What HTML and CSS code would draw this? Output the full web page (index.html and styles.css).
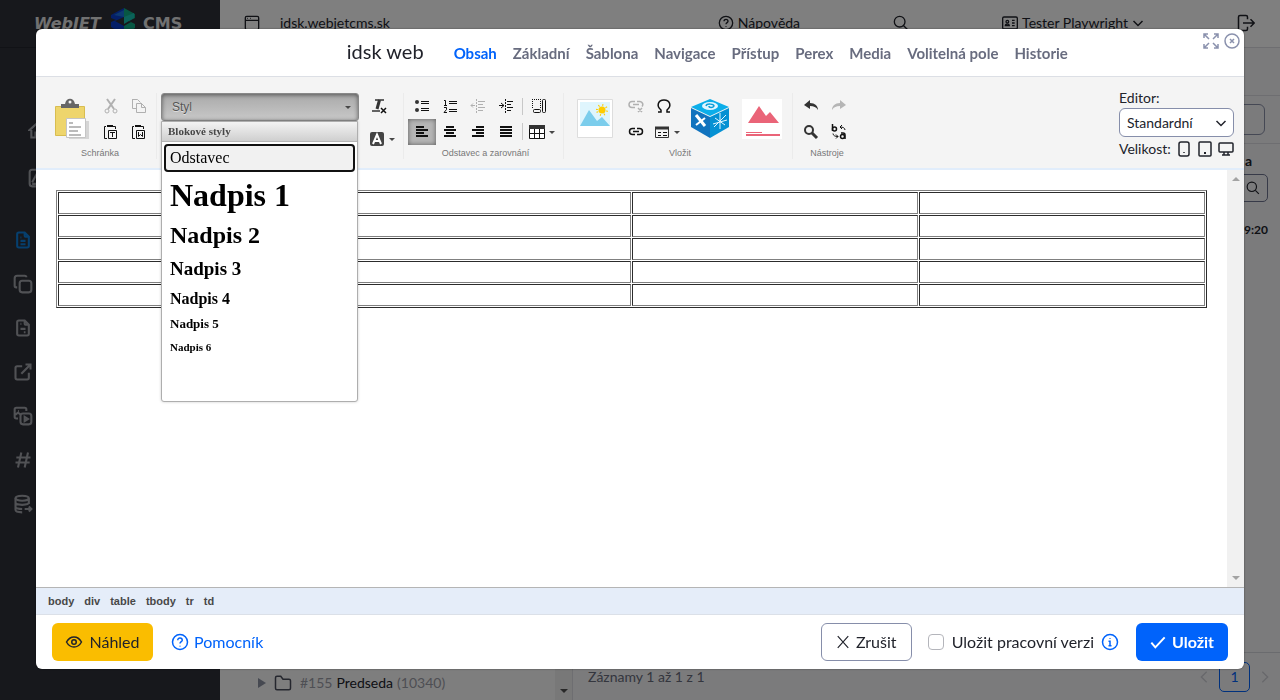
FILE: index.html
```html
<!DOCTYPE html>
<html lang="cs">
<head>
<meta charset="utf-8">
<title>WebJET CMS – idsk web</title>
<link rel="stylesheet" href="styles.css">
</head>
<body>
<svg class="sprite" aria-hidden="true">
  <symbol id="file" viewBox="0 0 24 24"><path d="M14 3v4a1 1 0 0 0 1 1h4M17 21H7a2 2 0 0 1-2-2V5a2 2 0 0 1 2-2h7l5 5v11a2 2 0 0 1-2 2zM9 9h1M9 13h6M9 17h6"/></symbol>
  <symbol id="copy" viewBox="0 0 24 24"><rect x="8" y="8" width="14" height="14" rx="3"/><path d="M5 16H4a2 2 0 0 1-2-2V5a3 3 0 0 1 3-3h9a2 2 0 0 1 2 2"/></symbol>
  <symbol id="invoice" viewBox="0 0 24 24"><path d="M14 3v4a1 1 0 0 0 1 1h4M17 21H7a2 2 0 0 1-2-2V5a2 2 0 0 1 2-2h7l5 5v11a2 2 0 0 1-2 2zM9 7h1M9 13h6M13 17h2"/></symbol>
  <symbol id="external" viewBox="0 0 24 24"><path d="M11 5H5a2 2 0 0 0-2 2v12a2 2 0 0 0 2 2h12a2 2 0 0 0 2-2v-6M10 14 21 3M15 3h6v6"/></symbol>
  <symbol id="media" viewBox="0 0 24 24"><rect x="9" y="9" width="13" height="13" rx="3"/><path d="M6 15H4a2 2 0 0 1-2-2V4a2 2 0 0 1 2-2h10a2 2 0 0 1 2 2v2M6 6h1M2 11l4-3 3 2M14 13v5l4-2.500z"/></symbol>
  <symbol id="hash" viewBox="0 0 24 24"><path d="M4 9h17M3 15h17M10 3 6 21M18 3l-4 18"/></symbol>
  <symbol id="database" viewBox="0 0 24 24"><ellipse cx="11" cy="5" rx="8" ry="3"/><path d="M3 5v14c0 2 3 3 8 3M3 10c0 2 3 3 8 3s8-1 8-3M19 5v7M3 15c0 2 3 3 8 3M14 18h8M19 15l3 3-3 3"/></symbol>
  <symbol id="home" viewBox="0 0 24 24"><path d="M4 12H2l10-9 10 9h-2M4 12v9h16v-9M9 21v-6h6v6"/></symbol>
  <symbol id="chart" viewBox="0 0 24 24"><rect x="2" y="2" width="20" height="20" rx="3"/><path d="m5 17 5-9 4 6 4-8M5 19h14"/></symbol>
  <symbol id="window" viewBox="0 0 24 24"><rect x="2" y="2" width="20" height="20" rx="2"/><path d="M2 8h20M5 5h1M9 5h1"/></symbol>
  <symbol id="help" viewBox="0 0 24 24"><circle cx="12" cy="12" r="10"/><path d="M9 9.500c0-4 6-3.500 6 0 0 2-3 2-3 4.500M12 17v1"/></symbol>
  <symbol id="search" viewBox="0 0 24 24"><circle cx="10" cy="10" r="8"/><path d="m16 16 6 6"/></symbol>
  <symbol id="card" viewBox="0 0 24 24"><rect x="1" y="3" width="22" height="18" rx="2"/><circle cx="8" cy="10" r="2"/><path d="M5 16c0-3 6-3 6 0zM15 8h4M15 12h4M15 16h4"/></symbol>
  <symbol id="down" viewBox="0 0 24 24"><path d="m3 8 9 9 9-9"/></symbol>
  <symbol id="logout" viewBox="0 0 24 24"><path d="M14 7V4a2 2 0 0 0-2-2H4a2 2 0 0 0-2 2v16a2 2 0 0 0 2 2h8a2 2 0 0 0 2-2v-3M8 12h15M18 7l5 5-5 5"/></symbol>
  <symbol id="info" viewBox="0 0 24 24"><circle cx="12" cy="12" r="10"/><path d="M12 7v1M10 11h2v6M10 17h4"/></symbol>
  <symbol id="eye" viewBox="0 0 24 24"><path d="M2 12c5-9 15-9 20 0-5 9-15 9-20 0z"/><circle cx="12" cy="12" r="3"/></symbol>
  <symbol id="x" viewBox="0 0 24 24"><path d="m3 2 18 20M21 2 3 22"/></symbol>
  <symbol id="check" viewBox="0 0 24 24"><path d="m2 13 6 7L22 5"/></symbol>
  <symbol id="folder" viewBox="0 0 24 24"><path d="M4 3h5l3 4h8a2 2 0 0 1 2 2v10a2 2 0 0 1-2 2H4a2 2 0 0 1-2-2V5a2 2 0 0 1 2-2z"/></symbol>
  <symbol id="left" viewBox="0 0 24 24"><path d="m16 4-8 8 8 8"/></symbol>
  <symbol id="right" viewBox="0 0 24 24"><path d="m8 4 8 8-8 8"/></symbol>
</svg>

<div class="app">
  <aside class="sidebar">
    <div class="logo">
      <span class="logo-web">WebJET</span>
      <svg class="logo-mark" viewBox="0 0 26 28"><path fill="#0a3fd0" d="M0 8 13 1v9L4 14l9 5v9L0 20v-5l5-2-5-2z"/><path fill="#0fae86" d="m13 1 11 6v4l-6 3 6 3v4l-11 7v-9l7-4-7-5z"/><path fill="#16c4b4" d="m13 10 10-4v5l-10 6z"/><path fill="#1a72e0" d="m3 8 10-5v7z"/></svg>
      <span class="logo-cms">CMS</span>
    </div>
    <nav class="sections" aria-label="Sekce">
      <a href="#home" aria-label="Domů"><svg class="ico"><use href="#home"/></svg></a>
      <a href="#stats" aria-label="Statistika"><svg class="ico"><use href="#chart"/></svg></a>
    </nav>
    <nav class="pages" aria-label="Menu">
      <a href="#pages" class="current" aria-label="Web stránky"><svg class="ico"><use href="#file"/></svg></a>
      <a href="#templates" aria-label="Šablony"><svg class="ico"><use href="#copy"/></svg></a>
      <a href="#forms" aria-label="Formuláře"><svg class="ico"><use href="#invoice"/></svg></a>
      <a href="#links" aria-label="Odkazy"><svg class="ico"><use href="#external"/></svg></a>
      <a href="#media" aria-label="Média"><svg class="ico"><use href="#media"/></svg></a>
      <a href="#tags" aria-label="Značky"><svg class="ico"><use href="#hash"/></svg></a>
      <a href="#data" aria-label="Data"><svg class="ico"><use href="#database"/></svg></a>
    </nav>
  </aside>
  <div class="main">
    <header class="topbar">
      <span class="domain"><svg class="ico16"><use href="#window"/></svg>idsk.webjetcms.sk</span>
      <a href="#help"><svg class="ico16"><use href="#help"/></svg>Nápověda</a>
      <a href="#search" aria-label="Hledat"><svg class="ico16"><use href="#search"/></svg></a>
      <a href="#user"><svg class="ico16"><use href="#card"/></svg>Tester Playwright<svg class="ico12"><use href="#down"/></svg></a>
      <a href="#logout" aria-label="Odhlásit"><svg class="ico18"><use href="#logout"/></svg></a>
    </header>
    <div class="workspace">
      <section class="tree">
        <div class="tree-row"><span class="tri-right"></span><svg class="ico18"><use href="#folder"/></svg><span class="muted">#155</span><span>Predseda</span><span class="muted">(10340)</span></div>
        <div class="tree-scroll"><span class="tri-down"></span></div>
      </section>
      <section class="records">
        <div class="strip"></div>
        <div class="strip"><input class="filter" type="text" aria-label="Filtr"></div>
        <div class="cell-head">a</div>
        <button class="search-btn" aria-label="Hledat"><svg class="ico14"><use href="#search"/></svg></button>
        <div class="cell-time">9:20</div>
        <footer class="pager">
          <span class="count">Záznamy 1 až 1 z 1</span>
          <svg class="ico16 faint"><use href="#left"/></svg>
          <button class="page">1</button>
          <svg class="ico16 faint"><use href="#right"/></svg>
        </footer>
      </section>
    </div>
  </div>
</div>

<div class="backdrop">
<div class="modal" role="dialog" aria-label="idsk web">
  <header class="modal-head">
    <h1>idsk web</h1>
    <nav class="tabs">
      <a class="active" href="#obsah">Obsah</a><a href="#zakladni">Základní</a><a href="#sablona">Šablona</a><a href="#navigace">Navigace</a><a href="#pristup">Přístup</a><a href="#perex">Perex</a><a href="#mediat">Media</a><a href="#pole">Volitelná pole</a><a href="#historie">Historie</a>
    </nav>
    <div class="win">
      <button aria-label="Zvětšit"><svg viewBox="0 0 16 16"><path d="M1 5V1h4M11 1h4v4M15 11v4h-4M5 15H1v-4M1 1l5 5M15 1l-5 5M15 15l-5-5M1 15l5-5"/></svg></button>
      <button aria-label="Zavřít"><svg viewBox="0 0 16 16"><circle cx="8" cy="8" r="7"/><path d="m6 6 4 4M10 6l-4 4"/></svg></button>
    </div>
  </header>

  <div class="toolbar">
    <section class="group">
      <div class="tools">
        <button class="big" aria-label="Vložit"><svg width="34" height="42" viewBox="0 0 34 42"><path fill="#eed56c" stroke="#d8bd50" d="M.5 8.500h29v29H.5z"/><path fill="#d5d5d5" d="M14 23h20v18H14z"/><path fill="#666" d="M6 6h4c1-7 9-7 10 0h4v4H6z"/><circle cx="15" cy="4" r="1.500" fill="#f4f4f4"/><path fill="#fff" stroke="#c5c5c5" d="M11.500 20.500h19v19h-19z"/><path stroke="#bbb" stroke-width="2" d="M14 25h4M14 29h12M14 33h9M14 37h12"/></svg></button>
        <div class="cells two">
          <button aria-label="Vyjmout"><svg class="i dim" viewBox="0 0 16 16"><path d="m4 1 7 10M12 1 5 11" stroke-width="2"/><circle cx="4" cy="13" r="2"/><circle cx="12" cy="13" r="2"/></svg></button>
          <button aria-label="Kopírovat"><svg class="i dim" viewBox="0 0 16 16"><path d="M1.500 1.500h5l3 3M1.500 1v9.500H5M5.500 5.500h5l4 4v5h-9zM10.500 5v4.500h4"/></svg></button>
          <button aria-label="Vložit text"><svg class="i" viewBox="0 0 16 16"><path d="M3 2.500H1.500v12H4M10 2.500h2.500V5M5.500 6.500h8v8h-8z"/><path stroke-width="2" d="M4 2h6"/><path d="M7 8.500h5M9.500 8.500V13"/></svg></button>
          <button aria-label="Vložit z Wordu"><svg class="i" viewBox="0 0 16 16"><path d="M3 2.500H1.500v12H4M10 2.500h2.500V5M5.500 6.500h8v8h-8z"/><path stroke-width="2" d="M4 2h6"/><path d="M7.500 8v4.500l2-2 2 2V8"/></svg></button>
        </div>
      </div>
      <div class="group-label">Schránka</div>
    </section>

    <section class="group style-group">
      <div class="tools">
        <div class="combo">
          <button class="combo-btn" aria-expanded="true">Styl<span class="caret"></span></button>
          <div class="combo-panel">
            <div class="combo-title">Blokové styly</div>
            <ul role="listbox">
              <li class="p focused">Odstavec</li>
              <li class="s1">Nadpis 1</li>
              <li class="s2">Nadpis 2</li>
              <li class="s3">Nadpis 3</li>
              <li class="s4">Nadpis 4</li>
              <li class="s5">Nadpis 5</li>
              <li class="s6">Nadpis 6</li>
            </ul>
          </div>
        </div>
        <div class="format">
          <button aria-label="Odstranit formátování"><svg class="i" viewBox="0 0 16 16"><path stroke="#333" stroke-width="1.500" d="M4 2h9M1 13h8"/><path stroke="#333" stroke-width="3" d="M8.500 2 6 11"/><path stroke-width="1.500" d="m10 10 5 5M15 10l-5 5"/></svg></button>
          <button class="with-caret" aria-label="Barva pozadí"><svg class="i" viewBox="0 0 16 16"><rect x="1" y="1" width="14" height="14" rx="2" fill="#444" stroke="none"/><path stroke="#fff" stroke-width="2" d="m4 13 4-9.500L12 13M5.500 10h5"/></svg><span class="caret"></span></button>
        </div>
      </div>
    </section>

    <section class="group">
      <div class="tools">
        <div class="cells four">
          <button aria-label="Odrážky"><svg class="i" viewBox="0 0 16 16"><circle cx="3" cy="4" r="2" fill="#333" stroke="none"/><circle cx="3" cy="12" r="2" fill="#333" stroke="none"/><path d="M7 3.500h8M7 5.500h8M7 10.500h8M7 12.500h8"/></svg></button>
          <button aria-label="Číslování"><svg class="i" viewBox="0 0 16 16"><path d="M2 2.500h1.500V7M2 7.500h3M2 9.500h2.500v2L2 14.500h3M7 3.500h8M7 5.500h8M7 11.500h8M7 13.500h8"/></svg></button>
          <button aria-label="Zmenšit odsazení"><svg class="i dim" viewBox="0 0 16 16"><path d="M6.500 1v14" stroke-dasharray="2 1"/><path d="M8 3.500h7M8 6.500h5M8 9.500h7M8 12.500h5M5 7.500H1M3 5.500l-2 2 2 2"/></svg></button>
          <button aria-label="Zvětšit odsazení"><svg class="i" viewBox="0 0 16 16"><path d="M7.500 1v14" stroke-dasharray="2 1"/><path d="M9 3.500h6M9 6.500h4M9 9.500h6M9 12.500h4M1 7.500h5M3 5l3 2.500L3 10"/></svg></button>
          <button class="pressed" aria-label="Zarovnat vlevo"><svg class="i thick" viewBox="0 0 16 16"><path d="M2 3h8M2 6h12M2 9h8M2 12h12"/></svg></button>
          <button aria-label="Na střed"><svg class="i thick" viewBox="0 0 16 16"><path d="M4 3h8M2 6h12M4 9h8M2 12h12"/></svg></button>
          <button aria-label="Zarovnat vpravo"><svg class="i thick" viewBox="0 0 16 16"><path d="M6 3h8M2 6h12M6 9h8M2 12h12"/></svg></button>
          <button aria-label="Do bloku"><svg class="i thick" viewBox="0 0 16 16"><path d="M2 3h12M2 6h12M2 9h12M2 12h12"/></svg></button>
        </div>
        <div class="rules"><span></span><span></span></div>
        <div class="format">
          <button aria-label="Blok"><svg class="i" viewBox="0 0 16 16"><path stroke-dasharray="1 1" d="M1.500 1v9M1 1.500h9M9.500 1v9"/><rect x="2.500" y="11.500" width="7" height="3" rx="1"/><rect x="11.500" y="1.500" width="3" height="13" rx="1"/></svg></button>
          <button class="with-caret" aria-label="Tabulka"><svg class="i" viewBox="0 0 16 16"><path fill="#fff" d="M.5 2.500h15v12H.5zM.5 9.500h15M5.500 4v10M10.500 4v10"/><path stroke="#333" stroke-width="4" d="M0 3h16"/></svg><span class="caret"></span></button>
        </div>
      </div>
      <div class="group-label">Odstavec a zarovnání</div>
    </section>

    <section class="group">
      <div class="tools">
        <button class="big" aria-label="Obrázek"><svg width="36" height="40" viewBox="0 0 36 40"><path fill="#fff" stroke="#ddd" d="M.5.5h35v38H.5z"/><path fill="#dff5fd" d="M3 3h30v24H3z"/><path fill="#7bcdec" d="M3 27 12 11l8 11 5-4 8 9z"/><circle cx="25" cy="11" r="3.500" fill="#fc0"/><path stroke="#fc0" stroke-width="2" stroke-dasharray="1 3" fill="none" d="M20 11a5 5 0 0 1 10 0 5 5 0 0 1-10 0"/></svg></button>
        <div class="cells two">
          <button aria-label="Zrušit odkaz"><svg class="i dim" viewBox="0 0 16 16"><path d="M7 9.500H4a3 3 0 0 1 0-6h3M9 3.500h3a3 3 0 0 1 2 5M5 6.500h6M10 10l4 4M14 10l-4 4" stroke-width="1.500"/></svg></button>
          <button aria-label="Symbol"><svg class="i" viewBox="0 0 16 16"><path stroke-width="1.500" d="M2 14h3v-2C0 8 2 2 8 2s8 6 3 10v2h3"/></svg></button>
          <button aria-label="Odkaz"><svg class="i" viewBox="0 0 16 16"><path stroke-width="1.500" d="M7 4.500H4.500a3 3 0 0 0 0 6H7M9 4.500h2.500a3 3 0 0 1 0 6H9M5 7.500h6"/></svg></button>
          <button class="with-caret" aria-label="Formulář"><svg class="i" viewBox="0 0 16 16"><path stroke="#333" d="M1.500 3.500h13v10h-13z"/><path stroke="#333" stroke-width="3" d="M1 4h14"/><path d="M4 8.500h3M4 11.500h3M9 8.500h4M9 11.500h4"/></svg><span class="caret"></span></button>
        </div>
        <button class="big cube" aria-label="Aplikace"><svg width="40" height="42" viewBox="0 0 40 42"><path fill="#0baeea" d="m20 1 19 8-19 9L1 9z"/><path fill="#1173be" d="m1 10 19 9v21L1 29z"/><path fill="#0591d3" d="m39 10-19 9v21l19-11z"/><ellipse cx="20" cy="8" rx="8" ry="4" fill="#e2f6ff"/><path fill="none" stroke="#0b9ed8" stroke-width="1.500" d="M16 8c1-3 8-2 8 0-1 2-5 2-5 0"/><path stroke="#fff" stroke-width="3" d="m6 17 9 11"/><path stroke="#fff" stroke-width="2" d="M15 20 6 27"/><path stroke="#e2f6ff" d="m24 29 12-12M25 20l10 7M30 15v16M23 26l14-4"/></svg></button>
        <button class="big" aria-label="Galerie"><svg width="40" height="40" viewBox="0 0 40 40"><path fill="#fff" d="M0 0h40v40H0z"/><path fill="#ea6478" d="M6 24 17 7l7 10 4-4 9 11z"/><path fill="#ea6478" d="M4 33h16v1H4zM4 35h34v2H4z"/></svg></button>
      </div>
      <div class="group-label">Vložit</div>
    </section>

    <section class="group last">
      <div class="tools">
        <div class="cells two">
          <button aria-label="Zpět"><svg class="i" viewBox="0 0 16 16"><path fill="#333" stroke="none" d="m1 7 6-5v3c5 0 8 3 8 7-2-3-4-4-8-4v3z"/></svg></button>
          <button aria-label="Znovu"><svg class="i" viewBox="0 0 16 16"><path fill="#b5b5b5" stroke="none" d="M15 7 9 2v3c-5 0-8 3-8 7 2-3 4-4 8-4v3z"/></svg></button>
          <button aria-label="Najít"><svg class="i" viewBox="0 0 16 16"><circle cx="6" cy="6" r="4" stroke="#333" stroke-width="2"/><path stroke="#333" stroke-width="3" d="m9 9 5 5"/></svg></button>
          <button aria-label="Nahradit"><svg class="i" viewBox="0 0 16 16"><path stroke-width="1.500" d="M1.500 0v7"/><circle cx="3.500" cy="5" r="2" stroke-width="1.500"/><circle cx="11.500" cy="12.500" r="2" stroke-width="1.500"/><path stroke-width="1.500" d="M10 9h2q2 0 2 2v4"/><path d="M14 6c0-2-2-3-5-3M11 1 9 3l2 2M2 9.500c0 2 2 3 5 3M5 10.500l2 2-2 2"/></svg></button>
        </div>
      </div>
      <div class="group-label">Nástroje</div>
    </section>

    <div class="editor-opts">
      <label for="editor">Editor:</label>
      <div class="select"><select id="editor"><option>Standardní</option></select><svg class="ico12"><use href="#down"/></svg></div>
      <div class="sizes"><span>Velikost:</span>
        <button aria-label="Telefon"><svg viewBox="0 0 16 16"><rect x="3" y="1" width="10" height="14" rx="2"/><path d="M8 11v1"/></svg></button>
        <button aria-label="Tablet"><svg viewBox="0 0 16 16"><rect x="2" y="1" width="12" height="14" rx="1"/><path stroke-width="2" d="M8 11v2"/></svg></button>
        <button aria-label="Počítač"><svg viewBox="0 0 16 16"><rect x="1" y="2" width="14" height="9" rx="1"/><path d="M6 11v3M10 11v3M4 14h8"/></svg></button>
      </div>
    </div>
  </div>

  <div class="canvas">
    <div class="doc">
      <table aria-label="Obsah">
        <tr><td></td><td></td><td></td><td></td></tr>
        <tr><td></td><td></td><td></td><td></td></tr>
        <tr><td></td><td></td><td></td><td></td></tr>
        <tr><td></td><td></td><td></td><td></td></tr>
        <tr><td></td><td></td><td></td><td></td></tr>
      </table>
    </div>
    <div class="scroll"><span class="tri-up"></span><span class="tri-down"></span></div>
  </div>

  <nav class="path" aria-label="Cesta"><a href="#body">body</a><a href="#div">div</a><a href="#table">table</a><a href="#tbody">tbody</a><a href="#tr">tr</a><a href="#td">td</a></nav>

  <footer class="modal-foot">
    <button class="btn preview"><svg class="ico18"><use href="#eye"/></svg>Náhled</button>
    <a class="helper" href="#pomocnik"><svg class="ico18"><use href="#help"/></svg>Pomocník</a>
    <span class="spacer"></span>
    <button class="btn cancel"><svg class="ico14"><use href="#x"/></svg>Zrušit</button>
    <label class="draft" for="draft"><input id="draft" type="checkbox">Uložit pracovní verzi<svg class="ico18"><use href="#info"/></svg></label>
    <button class="btn save"><svg class="ico16"><use href="#check"/></svg>Uložit</button>
  </footer>
</div>
</div>
</body>
</html>
```
FILE: styles.css
```css
* { box-sizing: border-box; }
body { margin: 0; font: 14px/20px Lato, "Open Sans", sans-serif; color: #21232b; overflow: hidden; }
a { color: inherit; text-decoration: none; }
button { font: inherit; color: inherit; border: 0; padding: 0; background: none; }
svg { fill: none; stroke: currentColor; stroke-width: 2; flex: none; }
.sprite { position: absolute; width: 0; height: 0; }
.ico { width: 20px; height: 20px; stroke-width: 2.5; }
.ico18 { width: 18px; height: 18px; }
.ico16 { width: 16px; height: 16px; }
.ico14 { width: 14px; height: 14px; }
.ico12 { width: 12px; height: 12px; stroke-width: 3; }

/* Application behind the dialog */
.app { display: flex; height: 100vh; }
.sidebar { width: 220px; flex: none; background: #2e3039; color: #a3a4ab; }
.logo { display: flex; align-items: center; gap: 6px; height: 48px; padding-left: 34px; border-bottom: 1px solid #22242c; color: #e3e3e3; font: bold 16px/20px "DejaVu Sans", sans-serif; }
.logo-web { font-style: italic; width: 71px; }
.logo-web, .logo-cms { white-space: nowrap; }
.logo-mark { width: 26px; height: 28px; stroke: none; margin-top: -6px; }
.sections { padding: 58px 0 16px 28px; }
.sections a { display: flex; align-items: center; height: 48px; }
.pages a { display: flex; align-items: center; height: 44px; padding-left: 13px; }
.pages .current { color: #0c7fdc; }
.main { flex: 1; display: flex; flex-direction: column; min-width: 0; }
.topbar { display: flex; align-items: center; gap: 93px; height: 48px; padding: 0 25px 2px 24px; background: #fff; border-bottom: 1px solid #dcdde2; }
.topbar a { display: flex; align-items: center; gap: 4px; }
.domain { flex: 1; display: flex; align-items: center; gap: 20px; }
.workspace { flex: 1; display: flex; min-height: 0; }
.tree { width: 353px; flex: none; display: flex; align-items: flex-end; background: #fcfcfd; border-right: 1px solid #dcdde2; }
.tree-row { flex: 1; display: flex; align-items: center; gap: 4px; height: 34px; padding-left: 38px; }
.tree-row .ico18 { margin: 0 4px; color: #4b4e5c; }
.muted { color: #9c9ea8; }
.tri-right { border: 5px solid transparent; border-left: 8px solid #8c93a3; border-right: 0; }
.tree-scroll { width: 17px; height: 100%; display: flex; align-items: flex-end; justify-content: center; padding-bottom: 7px; background: #f0f0f0; }
.tri-down, .tri-up { width: 0; border: 4px solid transparent; }
.tri-down { border-top-color: #505050; border-bottom: 0; }
.tri-up { border-bottom-color: #a3a3a3; border-top: 0; }
.records { flex: 1; display: flex; flex-direction: column; align-items: stretch; background: #f6f6f9; }
.strip { height: 48px; padding: 8px 15px; border-bottom: 1px solid #dcdde2; text-align: right; }
.filter { width: 120px; height: 31px; border: 1px solid #8b91a9; border-radius: 6px; background: transparent; }
.cell-head { height: 30px; padding: 7px 28px 0; text-align: right; font-weight: bold; }
.search-btn { align-self: flex-end; width: 30px; height: 28px; margin-right: 12px; border: 1px solid #6e7590; border-radius: 5px; display: flex; align-items: center; justify-content: center; }
.cell-time { padding: 18px 12px; text-align: right; font-weight: bold; font-size: 12px; }
.pager { display: flex; align-items: center; gap: 7px; height: 48px; margin-top: auto; padding: 0 7px 0 15px; border-top: 1px solid #d5d6dc; }
.count { flex: 1; color: #686c7c; }
.page { width: 31px; height: 30px; border: 1px solid #0063fb; border-radius: 5px; color: #0063fb; }
.faint { color: #cfd0d6; }

/* Dialog */
.backdrop { position: fixed; inset: 0; display: flex; padding: 29px 36px 31px; background: rgba(0, 0, 0, .5); }
.modal { flex: 1; min-width: 0; display: flex; flex-direction: column; background: #fff; border-radius: 6px; box-shadow: 0 0 2px rgba(0, 0, 0, .5); }
.modal-head { position: relative; display: flex; align-items: center; height: 48px; border-bottom: 1px solid #dcdfe5; }
.modal-head h1 { width: 33%; margin: 0; padding: 0 11px 3px 0; text-align: right; font-size: 20px; font-weight: 400; }
.tabs { display: flex; gap: 16px; padding-left: 19px; font-size: 15px; font-weight: bold; color: #686c7f; }
.tabs .active { color: #0063fb; }
.win { position: absolute; top: 4px; right: 4px; display: flex; gap: 5px; color: #8a91ad; }
.win svg { display: block; width: 16px; height: 16px; stroke-width: 1.5; }

.toolbar { display: flex; height: 93px; padding: 16px 10px 0 7px; background: #f4f4f4; border-bottom: 2px solid #e1edfb; }
.group { height: 66px; padding: 0 4px; border-right: 1px solid #ebebeb; color: #777; font: 9px/16px "Liberation Sans", sans-serif; text-align: center; }
.group:first-child { padding: 0 3px 0 0; }
.group:first-child .big { padding-left: 4px; }
.group.last { border-right: 0; }
.group-label { padding-left: 4px; }
.style-group { width: 247px; }
.tools { display: flex; height: 52px; }
.cells { display: grid; grid-template-rows: 26px 26px; }
.two { grid-template-columns: 28px 28px; }
.four { grid-template-columns: 28px 28px 28px 28px; }
.cells button, .format button, .big { display: flex; align-items: center; justify-content: center; }
.big { width: 54px; height: 52px; }
.cube { margin-left: 6px; width: 52px; }
.cube + .big { width: 52px; }
.big svg { stroke: none; stroke-width: 1; }
.i { width: 16px; height: 16px; color: #111; stroke-width: 1; }
.dim { color: #b0b0b0; }
.thick { stroke-width: 2; }
.pressed { background: #b5b5b5; box-shadow: inset 0 0 5px rgba(0, 0, 0, .5); }
.caret { width: 0; border: 3px solid transparent; border-top-color: #474747; border-bottom: 0; }
.with-caret { gap: 4px; }
.cells .with-caret { width: 34px; }
.format button { width: 28px; height: 26px; flex: none; }
.format .with-caret { width: 34px; }
.style-group .format { display: flex; flex-direction: column; gap: 7px; margin-left: 6px; }
.rules { width: 5px; display: grid; gap: 8px; padding: 5px 2px; }
.rules span { border-left: 1px solid #c8c8c8; }

.combo { position: relative; width: 198px; }
.combo-btn { display: flex; align-items: center; justify-content: space-between; width: 100%; height: 28px; padding: 0 7px 0 10px; border: 1px solid #888; border-radius: 3px; background: linear-gradient(#a9a9a9, #c8c8c8); box-shadow: inset 0 1px 4px rgba(0, 0, 0, .5); color: #555; font-size: 12px; text-shadow: 0 1px 0 rgba(255, 255, 255, .5); }
.combo-panel { position: absolute; z-index: 2; top: 28px; left: 0; width: 197px; height: 281px; border: 1px solid #aeaeae; border-radius: 0 0 3px 3px; background: #fff; box-shadow: 0 0 3px rgba(0, 0, 0, .2); text-align: left; font-family: "Liberation Serif", serif; color: #000; }
.combo-title { height: 20px; padding: 0 6px; border-bottom: 1px solid #b6b6b6; background: linear-gradient(#f3f3f3, #cfcfcf); color: #474747; font-size: 11px; line-height: 18px; font-weight: bold; }
.combo ul { margin: 0; padding: 2px; list-style: none; font-weight: bold; }
.combo li { padding: 0 6px; }
.combo .p { height: 28px; padding: 0 4px; border: 2px solid #111; border-radius: 4px; background: #f1f1f1; font-weight: 400; font-size: 16px; line-height: 24px; }
.s1 { font-size: 32px; line-height: 46px; }
.s2 { font-size: 24px; line-height: 35px; }
.s3 { font-size: 19px; line-height: 32px; }
.s4 { font-size: 16px; line-height: 27px; }
.s5 { font-size: 13px; line-height: 24px; }
.s6 { font-size: 11px; line-height: 22px; }

.editor-opts { margin: -5px 0 0 auto; width: 115px; }
.editor-opts label { display: block; line-height: 19px; }
.select { position: relative; height: 29px; margin-top: 1px; }
.select select { display: block; width: 100%; height: 29px; padding: 0 7px; appearance: none; border: 1px solid #868eaa; border-radius: 6px; background: #fff; font: inherit; color: inherit; }
.select svg { position: absolute; right: 7px; top: 9px; pointer-events: none; }
.sizes { display: flex; justify-content: space-between; align-items: center; padding-top: 2px; }
.sizes svg { display: block; width: 16px; height: 16px; stroke-width: 1.5; }

.canvas { flex: 1; display: flex; min-height: 0; }
.doc { flex: 1; padding: 20px; }
.doc table { width: 100%; border: 1px solid; border-color: #808080 #2c2c2c #2c2c2c #808080; border-spacing: 1px; table-layout: fixed; }
.doc td { height: 22px; padding: 0; border: 1px solid; border-color: #2c2c2c #808080 #808080 #2c2c2c; }
.scroll { width: 17px; display: flex; flex-direction: column; justify-content: space-between; align-items: center; padding: 7px 0; background: #f1f1f1; }
.scroll .tri-down { border-top-color: #a3a3a3; }
.path { display: flex; align-items: center; gap: 10px; height: 28px; padding: 0 12px; border-top: 1px solid #b5b5b5; border-bottom: 1px solid #dbe0e8; background: #e5edf9; color: #484848; font: bold 11px/14px "Liberation Sans", sans-serif; }

.modal-foot { display: flex; align-items: center; height: 54px; padding: 0 16px; font-size: 16px; }
.btn { display: flex; align-items: center; justify-content: center; gap: 6px; height: 38px; border-radius: 6px; }
.preview { width: 101px; background: #fabd00; }
.helper { display: flex; align-items: center; gap: 5px; margin-left: 18px; color: #0063fb; }
.spacer { flex: 1; }
.cancel { width: 91px; border: 1px solid #868eaa; background: #fff; }
.draft { display: flex; align-items: center; margin: 0 17px 0 16px; }
.draft input { appearance: none; width: 16px; height: 16px; margin: 0 8px 0 0; border: 1px solid #b4b5bb; border-radius: 4px; background: #fff; }
.draft svg { margin-left: 7px; color: #0063fb; }
.save { width: 92px; background: #0063fb; color: #fff; font-weight: bold; }
.save svg { stroke-width: 3; }
```
